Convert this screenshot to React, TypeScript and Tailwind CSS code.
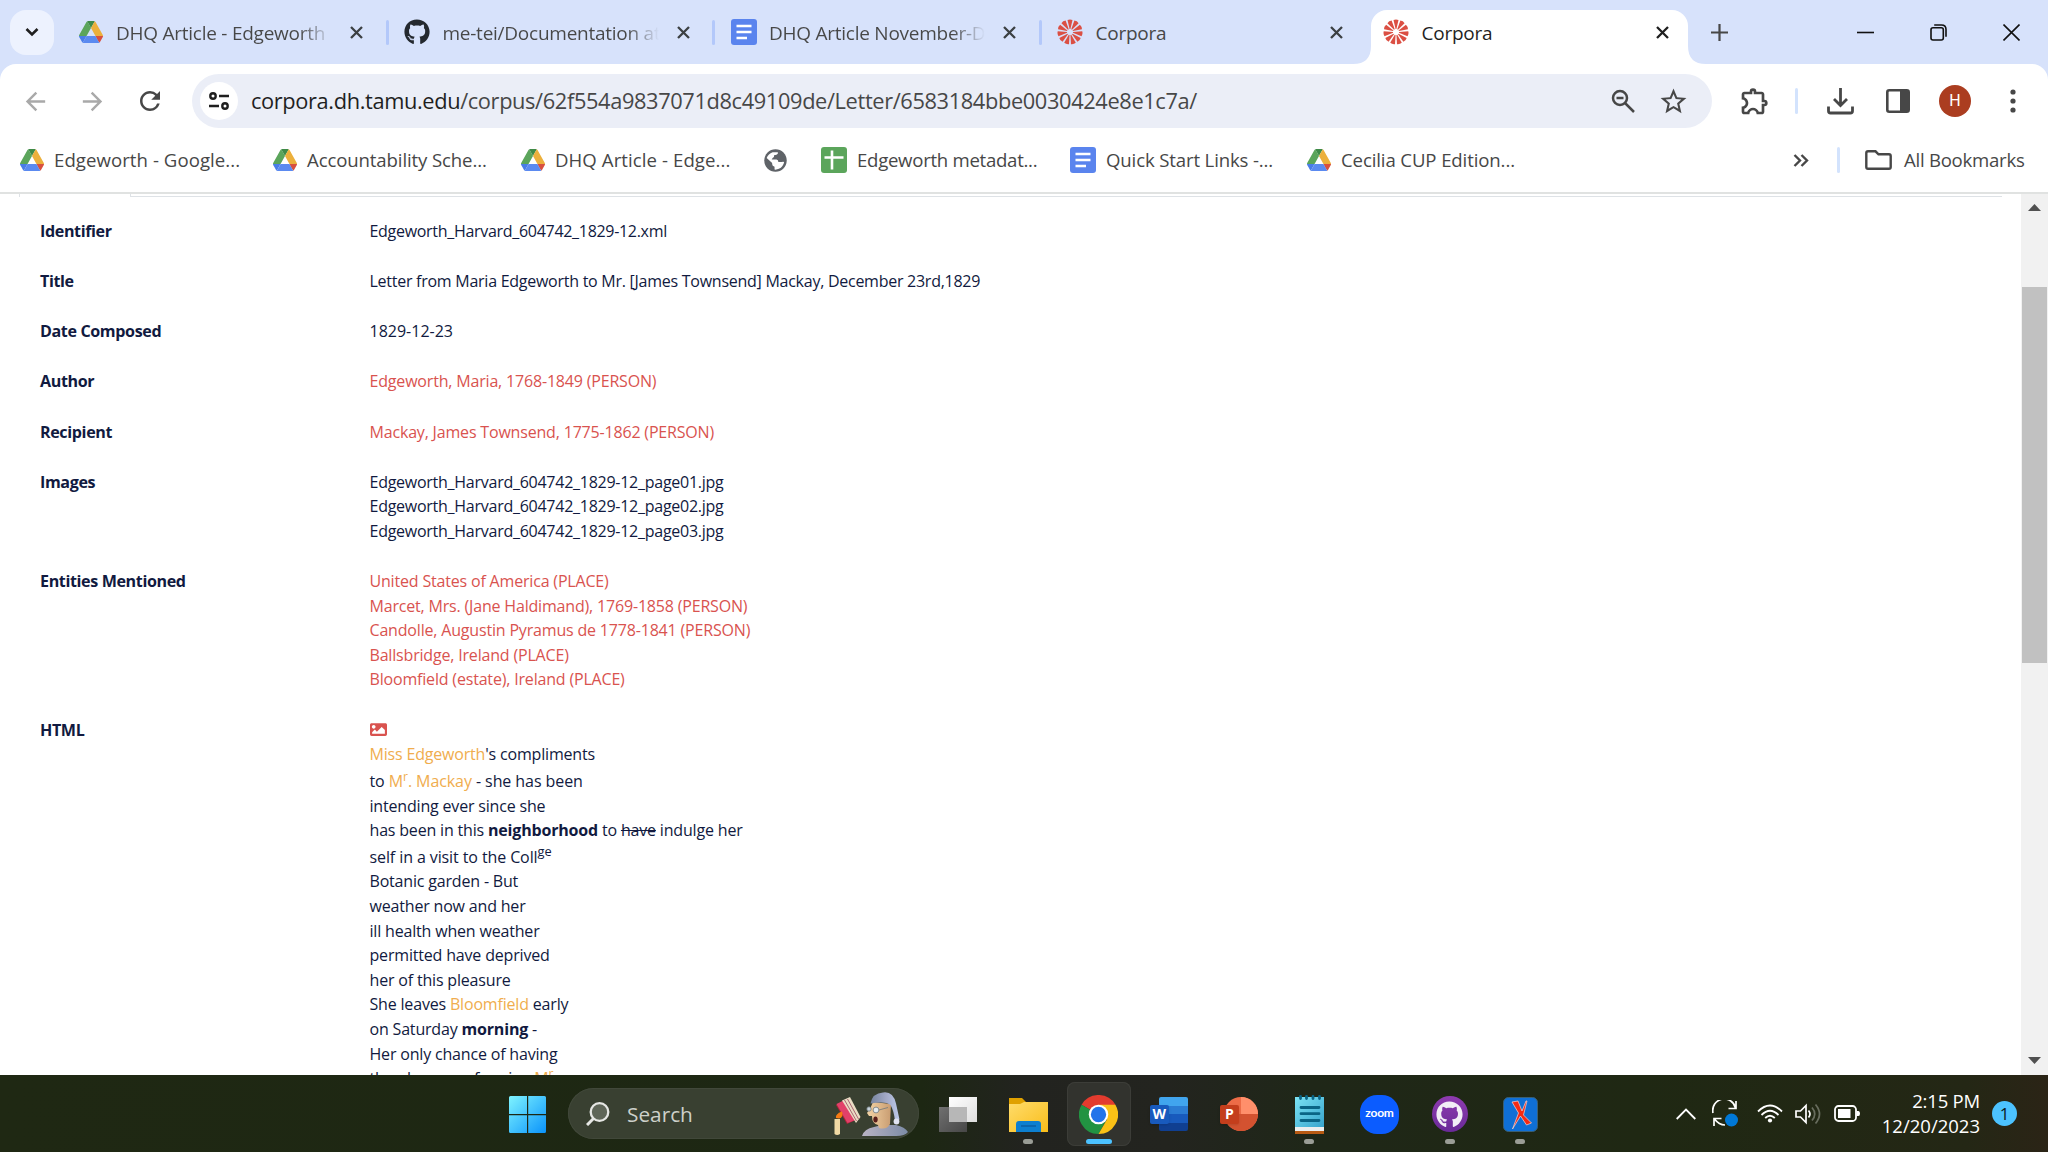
import React, { type ReactNode } from 'react';
import { FaGithub, FaImage } from 'react-icons/fa';
import { MdArrowBack, MdArrowForward, MdRefresh, MdStarOutline, MdOutlineExtension } from 'react-icons/md';

function DriveIcon() {
  return (
    <svg className="h-[22px] w-6 shrink-0" viewBox="0 0 87.3 78" preserveAspectRatio="none">
      <path d="m6.6 66.85 3.85 6.65c.8 1.4 1.95 2.5 3.3 3.3l13.75-23.8h-27.5c0 1.55.4 3.1 1.2 4.5z" fill="#4a7de8" />
      <path d="m43.65 25-13.75-23.8c-1.35.8-2.5 1.9-3.3 3.3l-25.4 44a9.06 9.06 0 0 0-1.2 4.5h27.5z" fill="#5ba55b" />
      <path d="m73.55 76.8c1.35-.8 2.5-1.9 3.3-3.3l1.6-2.75 7.65-13.25c.8-1.4 1.2-2.95 1.2-4.5h-27.502l5.852 11.5z" fill="#d8503f" />
      <path d="m43.65 25 13.75-23.8c-1.35-.8-2.9-1.2-4.5-1.2h-18.5c-1.6 0-3.15.45-4.5 1.2z" fill="#3f8a48" />
      <path d="m59.8 53h-32.3l-13.75 23.8c1.35.8 2.9 1.2 4.5 1.2h50.8c1.6 0 3.15-.45 4.5-1.2z" fill="#5b8af0" />
      <path d="m73.4 26.5-12.7-22c-.8-1.4-1.95-2.5-3.3-3.3l-13.75 23.8 16.15 28h27.45c0-1.55-.4-3.1-1.2-4.5z" fill="#ecb03c" />
    </svg>
  );
}

function DocsIcon() {
  return (
    <svg className="size-[26px] shrink-0" viewBox="0 0 26 26">
      <rect width="26" height="26" rx="3" fill="#5a84ee" />
      <path d="M5.5 7h15M5.5 13h15M5.5 19h10.5" stroke="#fff" strokeWidth="2.6" />
    </svg>
  );
}

function SheetsIcon() {
  return (
    <svg className="size-[26px] shrink-0" viewBox="0 0 26 26">
      <rect width="26" height="26" rx="3" fill="#5ba55b" />
      <path d="M3.5 10.5h19M11 3.5v19" stroke="#fff" strokeWidth="2.6" />
    </svg>
  );
}

function GlobeIcon() {
  return (
    <svg className="size-[23px] shrink-0" viewBox="0 0 24 24">
      <circle cx="12" cy="12" r="11.700" fill="#5f6368" />
      <path d="M2.800 9.500Q4.500 5 9 3.500h5.500q.5 2-1.500 2.500l-2.500.500q.5 2-1.500 3l-1 1.500h5q2 .5 2 2.500h3.500q1.500-.5 2.500 0-.8 5-5.500 7.200-2 1-4.500.8v-3q-2.500-.3-2.500-2.800v-1z" fill="#fff" />
    </svg>
  );
}

const petals = Array.from({ length: 11 }, (_, i) => (i * 360) / 11);

function CorporaIcon() {
  return (
    <svg className="size-[26px] shrink-0" viewBox="-13 -13 26 26">
      {petals.map((a) => (
        <path key={a} d="M-.4 -3L-2.500 -12Q0 -13.200 2.500 -12L.4 -3Z" fill="#db4f43" transform={`rotate(${a})`} />
      ))}
    </svg>
  );
}

function CloseX({ dark }: { dark?: boolean }) {
  return (
    <svg className={dark ? 'size-[13px] shrink-0 text-[#1f1f1f]' : 'size-[13px] shrink-0 text-[#3c4043]'} viewBox="0 0 13 13">
      <path d="M1 1l11 11M12 1L1 12" stroke="currentColor" strokeWidth="2.3" />
    </svg>
  );
}

function Tab({ icon, title, fade }: { icon: ReactNode; title: string; fade?: boolean }) {
  return (
    <div className="flex h-full w-[326.5px] shrink-0 items-center pl-[17px] pr-[24px]">
      <div className="flex w-[26px] justify-center">{icon}</div>
      <div
        className={
          fade
            ? 'ml-[12.500px] w-[216px] whitespace-nowrap bg-gradient-to-r from-[#474747] from-85% to-transparent bg-clip-text pt-[3px] text-transparent'
            : 'ml-[12.500px] w-[216px] whitespace-nowrap pt-[3px] text-[#474747]'
        }
      >
        {title}
      </div>
      <div className="ml-auto flex">
        <CloseX />
      </div>
    </div>
  );
}

function TabStrip() {
  const sep = <div className="-mx-[1.5px] h-[25px] w-[3px] shrink-0 rounded-full bg-[#b3c8fa]" />;
  return (
    <div className="flex h-16 items-center bg-[#d7e2fb] text-[19px] tracking-[-0.25px]">
      <div className="ml-[10px] flex h-[45px] w-11 shrink-0 items-center justify-center rounded-2xl bg-[#edf2fe]">
        <svg className="h-[10px] w-[14px]" viewBox="0 0 14 10">
          <path d="M1.5 2l5.5 5.5L12.500 2" fill="none" stroke="#1f1f1f" strokeWidth="2.6" />
        </svg>
      </div>
      <div className="w-[6.5px] shrink-0" />
      <Tab icon={<DriveIcon />} title="DHQ Article - Edgeworth" fade />
      {sep}
      <Tab icon={<FaGithub className="size-[26px] text-[#24292f]" />} title="me-tei/Documentation at" fade />
      {sep}
      <Tab icon={<DocsIcon />} title="DHQ Article November-D" fade />
      {sep}
      <Tab icon={<CorporaIcon />} title="Corpora" />
      <div className="relative ml-[4.500px] mt-[9.5px] flex h-[54.5px] w-[317px] shrink-0 items-center self-start rounded-t-2xl bg-white pb-[9.5px] pl-[12px] pr-[19px]">
        <svg className="absolute -left-[18px] bottom-0 size-[18px]" viewBox="0 0 18 18">
          <path d="M18 0v18H0Q18 18 18 0z" fill="#fff" />
        </svg>
        <svg className="absolute -right-[18px] bottom-0 size-[18px]" viewBox="0 0 18 18">
          <path d="M0 0v18h18Q0 18 0 0z" fill="#fff" />
        </svg>
        <CorporaIcon />
        <div className="ml-[12.500px] pt-[3px] text-[#1f1f1f]">Corpora</div>
        <div className="ml-auto flex">
          <CloseX dark />
        </div>
      </div>
      <svg className="ml-[23px] size-[17px]" viewBox="0 0 17 17">
        <path d="M8.5 0v17M0 8.500h17" stroke="#474747" strokeWidth="2.2" />
      </svg>
      <div className="ml-auto mr-[28px] flex items-center gap-[56px]">
        <svg className="size-[17px]" viewBox="0 0 17 17">
          <path d="M0 8.500h17" stroke="#111" strokeWidth="1.6" />
        </svg>
        <svg className="size-[17px]" viewBox="0 0 17 17" fill="none" stroke="#111" strokeWidth="1.6">
          <rect x="1" y="3.700" width="12.300" height="12.300" rx="2" />
          <path d="M4.200 1h7.300q4.500 0 4.500 4.500v7.300" />
        </svg>
        <svg className="size-[17px]" viewBox="0 0 17 17">
          <path d="M.5 .5l16 16M16.500 .5l-16 16" stroke="#111" strokeWidth="1.6" />
        </svg>
      </div>
    </div>
  );
}

function Toolbar() {
  return (
    <div className="flex h-[74px] items-center rounded-t-[16px] bg-white text-[#474747]">
      <div className="ml-[21px] flex w-[144px] items-center justify-between">
        <MdArrowBack className="size-[29px] text-[#a9a9a9]" />
        <MdArrowForward className="size-[29px] text-[#a9a9a9]" />
        <MdRefresh className="size-[30px]" />
      </div>
      <div className="ml-[27px] flex h-[54px] w-[1520px] items-center rounded-full bg-[#ebeef7] pl-2 pr-[23px]">
        <div className="flex size-[38px] items-center justify-center rounded-full bg-white">
          <svg className="h-[18px] w-5" viewBox="0 0 20 18" fill="none" stroke="#1f1f1f" strokeWidth="2.400">
            <circle cx="4" cy="4" r="2.700" />
            <path d="M10 4h10M0 14h10" />
            <circle cx="16" cy="14" r="2.700" />
          </svg>
        </div>
        <div className="ml-[13px] whitespace-nowrap text-[21.8px] tracking-[-0.37px]">
          <span className="text-[#1f1f1f]">corpora.dh.tamu.edu</span>/corpus/62f554a9837071d8c49109de/Letter/6583184bbe0030424e8e1c7a/
        </div>
        <svg className="ml-auto size-6" viewBox="0 0 24 24" fill="none" stroke="#474747" strokeWidth="2.500">
          <circle cx="9" cy="9" r="7" />
          <path d="M14 14l9 9M5.500 9h7" />
        </svg>
        <MdStarOutline className="ml-[23px] size-[31px]" />
      </div>
      <MdOutlineExtension className="ml-[27px] size-[32px]" />
      <div className="ml-6 h-[26px] w-[3px] rounded-full bg-[#d3e3fd]" />
      <svg className="ml-[29px] size-[27px]" viewBox="0 0 27 27" fill="none" stroke="#474747" strokeWidth="2.800">
        <path d="M13.500 0v17M7 11l6.500 6.500L20 11M1.500 18.500v4.500q0 2 2 2h20q2 0 2-2v-4.500" />
      </svg>
      <svg className="ml-[32px] size-6" viewBox="0 0 24 24">
        <rect x="1.300" y="1.300" width="21.400" height="21.400" rx="2" fill="none" stroke="#474747" strokeWidth="2.600" />
        <path d="M14 1h9v22h-9z" fill="#474747" />
      </svg>
      <div className="ml-[29px] flex size-8 items-center justify-center rounded-full bg-[#ab3d20] font-[Roboto] text-[16px] text-white">H</div>
      <svg className="ml-[39px] h-6 w-[6px]" viewBox="0 0 6 24" fill="#474747">
        <circle cx="3" cy="3" r="2.600" />
        <circle cx="3" cy="12" r="2.600" />
        <circle cx="3" cy="21" r="2.600" />
      </svg>
    </div>
  );
}

function Bookmark({ icon, label, className }: { icon: ReactNode; label?: string; className: string }) {
  return (
    <div className={`flex shrink-0 items-center gap-[10px] whitespace-nowrap ${className}`}>
      {icon}
      {label}
    </div>
  );
}

function Bookmarks() {
  return (
    <div className="flex h-14 items-center border-b-2 border-[#e0e2e1] bg-white pb-[10px] pl-5 text-[18.6px] text-[#474747]">
      <Bookmark icon={<DriveIcon />} label="Edgeworth - Google..." className="w-[253px] tracking-[0.06px]" />
      <Bookmark icon={<DriveIcon />} label="Accountability Sche..." className="w-[248px] tracking-[-0.12px]" />
      <Bookmark icon={<DriveIcon />} label="DHQ Article - Edge..." className="w-[243px] tracking-[0.08px]" />
      <Bookmark icon={<GlobeIcon />} className="w-[57px]" />
      <Bookmark icon={<SheetsIcon />} label="Edgeworth metadat..." className="w-[249px] tracking-[-0.28px]" />
      <Bookmark icon={<DocsIcon />} label="Quick Start Links -..." className="w-[237px] tracking-[-0.14px]" />
      <Bookmark icon={<DriveIcon />} label="Cecilia CUP Edition..." className="w-[208px] tracking-[-0.12px]" />
      <svg className="ml-auto h-[13px] w-4" viewBox="0 0 16 13">
        <path d="M1.500 1l5.500 5.500L1.500 12M8.500 1l5.500 5.500L8.500 12" fill="none" stroke="#474747" strokeWidth="2.400" />
      </svg>
      <div className="ml-7 h-[26px] w-[3px] rounded-full bg-[#d3e3fd]" />
      <svg className="ml-[25px] h-5 w-[27px]" viewBox="0 0 27 20">
        <path d="M1.300 3v14q0 1.700 1.700 1.700h21q1.700 0 1.700-1.700V6q0-1.700-1.700-1.700H13.500L10.500 1.300H3Q1.300 1.300 1.300 3z" fill="none" stroke="#474747" strokeWidth="2.400" />
      </svg>
      <div className="ml-3 mr-6 w-[120px] whitespace-nowrap tracking-[-0.26px]">All Bookmarks</div>
    </div>
  );
}

function Row({ label, children }: { label: string; children: ReactNode }) {
  return (
    <div className="flex py-[12.8px]">
      <div className="w-[329.5px] shrink-0 text-[16.1px] font-bold tracking-[-0.38px]">{label}</div>
      <div className="whitespace-nowrap">{children}</div>
    </div>
  );
}

const Red = ({ children }: { children: ReactNode }) => <div className="text-[#d9534f]">{children}</div>;
const Ref = ({ children }: { children: ReactNode }) => <span className="text-[#f0ad4e]">{children}</span>;
const File = ({ children }: { children: ReactNode }) => <div className="tracking-[-0.26px]">{children}</div>;

function Page() {
  return (
    <div className="flex h-[881px] overflow-hidden bg-white">
      <div className="h-full flex-1 overflow-hidden text-[16px] leading-[24.6px] tracking-[-0.18px] text-[#111a40]">
        <div className="ml-[19px] mr-[19px] flex h-[3px]">
          <div className="w-px bg-[#dee2e6]" />
          <div className="ml-[110px] flex-1 border-b border-l border-[#dee2e6]" />
        </div>
        <div className="pl-10 pt-[9px]">
          <Row label="Identifier"><div className="tracking-[-0.3px]">Edgeworth_Harvard_604742_1829-12.xml</div></Row>
          <Row label="Title"><div className="tracking-[-0.26px]">Letter from Maria Edgeworth to Mr. [James Townsend] Mackay, December 23rd,1829</div></Row>
          <Row label="Date Composed"><div className="tracking-normal">1829-12-23</div></Row>
          <Row label="Author"><Red>Edgeworth, Maria, 1768-1849 (PERSON)</Red></Row>
          <Row label="Recipient"><Red>Mackay, James Townsend, 1775-1862 (PERSON)</Red></Row>
          <Row label="Images">
            <File>Edgeworth_Harvard_604742_1829-12_page01.jpg</File>
            <File>Edgeworth_Harvard_604742_1829-12_page02.jpg</File>
            <File>Edgeworth_Harvard_604742_1829-12_page03.jpg</File>
          </Row>
          <Row label="Entities Mentioned">
            <Red>United States of America (PLACE)</Red>
            <Red>Marcet, Mrs. (Jane Haldimand), 1769-1858 (PERSON)</Red>
            <Red>Candolle, Augustin Pyramus de 1778-1841 (PERSON)</Red>
            <Red>Ballsbridge, Ireland (PLACE)</Red>
            <Red>Bloomfield (estate), Ireland (PLACE)</Red>
          </Row>
          <Row label="HTML">
            <div className="flex h-[24.6px] items-center"><FaImage className="size-[17px] text-[#d9534f]" /></div>
            <div><Ref>Miss Edgeworth</Ref>'s compliments</div>
            <div className="h-[26.7px] pt-[2px] tracking-[-0.08px]">to <Ref>M<sup className="text-[75%] leading-none">r</sup>. Mackay</Ref> - she has been</div>
            <div>intending ever since she</div>
            <div>has been in this <b>neighborhood</b> to <s>have</s> indulge her</div>
            <div className="h-[26.7px] pt-[2px] tracking-[-0.1px]">self in a visit to the Coll<sup className="text-[80%] leading-none">ge</sup></div>
            <div>Botanic garden - But</div>
            <div>weather now and her</div>
            <div>ill health when weather</div>
            <div>permitted have deprived</div>
            <div>her of this pleasure</div>
            <div>She leaves <Ref>Bloomfield</Ref> early</div>
            <div>on Saturday <b>morning</b> -</div>
            <div>Her only chance of having</div>
            <div>the pleasure of seeing <Ref>M<sup className="text-[75%] leading-none">r</sup></Ref></div>
          </Row>
        </div>
      </div>
      <div className="flex w-[27px] shrink-0 flex-col items-center bg-[#f1f1f1]">
        <svg className="mt-[10px] h-[7px] w-[13px]" viewBox="0 0 13 7"><path d="M6.500 0L13 7H0z" fill="#505050" /></svg>
        <div className="mt-[76px] h-[376px] w-[25px] bg-[#c1c1c1]" />
        <svg className="mb-[11px] mt-auto h-[7px] w-[13px]" viewBox="0 0 13 7"><path d="M6.500 7L13 0H0z" fill="#505050" /></svg>
      </div>
    </div>
  );
}

function Reader() {
  return (
    <svg className="h-[46px] w-[76px]" viewBox="0 0 76 46">
      <defs>
        <linearGradient id="cap" x1="0" x2="1"><stop offset="0" stopColor="#76849f" /><stop offset=".55" stopColor="#a3a9c6" /><stop offset="1" stopColor="#bccaea" /></linearGradient>
        <linearGradient id="robe" x1="0" x2="1"><stop offset="0" stopColor="#b9b3c4" /><stop offset="1" stopColor="#7c8ba6" /></linearGradient>
        <linearGradient id="skin" x1="0" x2="1"><stop offset="0" stopColor="#f3d3a4" /><stop offset="1" stopColor="#c99d72" /></linearGradient>
      </defs>
      <path d="M3 14l13-7 11 20-13 6z" fill="#b02438" />
      <path d="M3.500 13l10-5 9 21-8 3z" fill="#e2406a" />
      <path d="M9 9.500l8-3.500 10.500 20-4.500 6z" fill="#eadcc4" />
      <path d="M11.500 9l12 21M14.500 8l11 20" stroke="#a0566a" strokeWidth=".9" />
      <path d="M1.500 28h5.500v15q-2.800 2-5.500 0z" fill="#f0d9a4" />
      <path d="M3 27q-1-4 6-6.500 2 6-3 7z" fill="#f77b13" />
      <path d="M29 45q2-7 12-9l8-2h14q9 2 12 7-3 4-12 4z" fill="url(#robe)" />
      <path d="M40 11q-2 6-6 11l2 3 3 0q0 8 6 9l1 3q8 2 11-4l1-20z" fill="url(#skin)" />
      <path d="M37.500 12.500Q39.500 2 50 1.500q10-1.500 13 11l3.500 16-4.500 1.500Q61 20 57.500 14q-5-4-20-1.500z" fill="url(#cap)" />
      <circle cx="63.500" cy="30.500" r="2.900" fill="#e1e4f2" />
      <circle cx="43" cy="19" r="2.900" fill="#e6ecee" stroke="#6e777c" strokeWidth=".8" />
      <circle cx="36" cy="18" r="2.200" fill="#c8d4dc" stroke="#6e777c" strokeWidth=".8" />
      <path d="M46 19l9-2.500" stroke="#6e777c" strokeWidth=".8" />
      <ellipse cx="42.500" cy="28.500" rx="2.200" ry="3" fill="#5a1e1a" />
    </svg>
  );
}

function AppButton({ children, run, active }: { children: ReactNode; run?: boolean; active?: boolean }) {
  return (
    <div className={`relative flex size-16 items-center justify-center rounded-lg ${active ? 'bg-[#32332e] ring-1 ring-inset ring-[#3c3d38]' : ''}`}>
      {children}
      {run && <div className="absolute bottom-[2px] h-[5px] w-[10px] rounded-full bg-[#9a9d96]" />}
      {active && <div className="absolute bottom-[2px] h-[5px] w-[26px] rounded-full bg-[#4cc2ff]" />}
    </div>
  );
}

function Letter({ c, className }: { c: string; className: string }) {
  return <div className={`absolute left-0 top-[7.500px] flex size-[19px] items-center justify-center rounded-[2px] text-[14px] font-bold leading-none text-white shadow ${className}`}>{c}</div>;
}

function Taskbar() {
  return (
    <div className="flex h-[77px] items-center bg-[linear-gradient(90deg,#1f2813_0%,#1d2713_45%,#22231f_50%,#23241f_57%,#1f2718_64%,#1f2813_80%,#242715_96%,#2b2416_100%)]">
      <svg className="ml-[509px] mt-px size-[37px] shrink-0" viewBox="0 0 37 37">
        <defs><linearGradient id="win" x1="0" y1="0" x2="1" y2="1"><stop offset="0" stopColor="#7ff4ff" /><stop offset="1" stopColor="#0a93fb" /></linearGradient></defs>
        <path d="M1.500 0H18v18H0V1.500Q0 0 1.500 0zM19.200 0H35.500Q37 0 37 1.500V18H19.200zM0 19.200h18V37H1.500Q0 37 0 35.500zM19.200 19.200H37v16.300q0 1.500-1.500 1.500H19.200z" fill="url(#win)" />
      </svg>
      <div className="ml-[22px] flex h-[51px] w-[351px] shrink-0 items-center rounded-full bg-[#394031] pl-[18px] pr-[10px] ring-1 ring-inset ring-[#41483a]">
        <svg className="size-6" viewBox="0 0 24 24" fill="#5f6658" stroke="#e6e7e4" strokeWidth="2.300">
          <circle cx="13.500" cy="10" r="8.800" />
          <path d="M7.500 16.500L1 23" strokeWidth="3" />
        </svg>
        <div className="ml-[17px] pt-[2px] text-[20.800px] text-[#cdd0ca]">Search</div>
        <div className="ml-auto"><Reader /></div>
      </div>
      <div className="ml-[7px] mt-px flex w-[626px] shrink-0 items-center justify-between">
        <AppButton>
          <svg className="h-[35px] w-[38px]" viewBox="0 0 38 35">
            <defs>
              <linearGradient id="back" x1="0" y1="0" x2="1" y2="1"><stop offset="0" stopColor="#707070" /><stop offset="1" stopColor="#474747" /></linearGradient>
              <linearGradient id="front" x1="0" y1="0" x2="1" y2="1"><stop offset="0" stopColor="#ffffff" /><stop offset="1" stopColor="#dedede" /></linearGradient>
            </defs>
            <path d="M0 10h28v25H0z" fill="url(#back)" />
            <path d="M10 0h28v25H10z" fill="url(#front)" />
            <path d="M10 10h18v15H10z" fill="#b7b7b7" />
          </svg>
        </AppButton>
        <AppButton run>
          <svg className="h-[35px] w-[39px]" viewBox="0 0 39 35">
            <defs><linearGradient id="fold" x1="0" y1="0" x2="1" y2="1"><stop offset="0" stopColor="#ffdc6b" /><stop offset="1" stopColor="#f9bd1a" /></linearGradient></defs>
            <path d="M0 1h13l4 4v5H0z" fill="#e0a100" />
            <path d="M0 7h11l4-2h24v30H0z" fill="url(#fold)" />
            <path d="M7 35v-8q0-3 3-3h19q3 0 3 3v8z" fill="#0d7fd0" />
            <path d="M12 29h15" stroke="#0a4f8c" />
          </svg>
        </AppButton>
        <AppButton active>
          <svg className="size-[39px]" viewBox="0 0 48 48">
            <path d="M24 24L3.200 12A24 24 0 0 1 44.800 12z" fill="#e33b2e" />
            <path d="M24 24L3.200 12A24 24 0 0 0 24 48L34 30z" fill="#229342" />
            <path d="M24 12h20.800A24 24 0 0 1 24 48l10.400-18z" fill="#fbc116" />
            <circle cx="24" cy="24" r="12" fill="#fff" />
            <circle cx="24" cy="24" r="9.400" fill="#2374ea" />
          </svg>
        </AppButton>
        <AppButton>
          <div className="relative h-[34px] w-[38px]">
            <div className="ml-[9px] flex h-full flex-col overflow-hidden rounded-[2px]">
              <div className="flex-1 bg-[#41a5ee]" /><div className="flex-1 bg-[#2b7cd3]" /><div className="flex-1 bg-[#185abd]" /><div className="flex-1 bg-[#103f91]" />
            </div>
            <Letter c="W" className="bg-[#185abd]" />
          </div>
        </AppButton>
        <AppButton>
          <div className="relative h-[34px] w-[38px]">
            <svg className="ml-1 size-[34px]" viewBox="0 0 34 34">
              <circle cx="17" cy="17" r="17" fill="#ed6c47" />
              <path d="M17 17V0a17 17 0 0 1 17 17z" fill="#ff8f6b" />
              <path d="M0 17h34a17 17 0 0 1-34 0z" fill="#d35230" />
            </svg>
            <Letter c="P" className="bg-[#c43e1c]" />
          </div>
        </AppButton>
        <AppButton run>
          <svg className="h-[39px] w-[29px]" viewBox="0 0 29 39">
            <defs><linearGradient id="note" x1="0" y1="0" x2="1" y2="1"><stop offset="0" stopColor="#7be3f5" /><stop offset="1" stopColor="#38a4cc" /></linearGradient></defs>
            <path d="M0 34h29v5H0z" fill="#b75a13" />
            <path d="M0 31h29v5H0z" fill="#eceeee" />
            <path d="M0 2h29v30H0z" fill="url(#note)" />
            <path d="M5.500 1.500v2M11.500 1.500v2M18 1.500v2M24.500 1.500v2M6 12.500h18M6 18.700h18M6 25.500h18" stroke="#0a6485" strokeWidth="2.800" strokeLinecap="round" />
          </svg>
        </AppButton>
        <AppButton>
          <div className="flex size-[39px] items-center justify-center rounded-[17px] bg-[#0b5cff] pb-[2px] font-['Lato'] text-[12px] font-bold leading-none tracking-[-0.2px] text-white">zoom</div>
        </AppButton>
        <AppButton run>
          <div className="flex size-9 items-center justify-center rounded-full bg-gradient-to-b from-[#8f3bb0] to-[#6a2a98]"><FaGithub className="size-[27px] text-[#f2eef6]" /></div>
        </AppButton>
        <AppButton run>
          <svg className="size-[35px]" viewBox="0 0 35 35">
            <rect x=".5" y=".5" width="34" height="34" rx="5" fill="#0f6fd6" stroke="#3a5f72" />
            <path d="M9 5l6-1 4 10 4-10h1l-3.500 14 8 8-5 2-6-9-8 13 6-16z" fill="#f42a14" stroke="#f5d8d5" strokeWidth=".7" />
          </svg>
        </AppButton>
      </div>
      <div className="ml-auto mr-[31px] flex shrink-0 items-center">
        <svg className="h-3 w-[20px]" viewBox="0 0 20 12"><path d="M.7 11L10 1.500 19.300 11" fill="none" stroke="#fff" strokeWidth="1.800" /></svg>
        <svg className="ml-4 size-[27px]" viewBox="0 0 27 27" fill="none" stroke="#fff" strokeWidth="1.700">
          <path d="M1 13A11.500 11.500 0 0 1 23.500 8M24 1v7.500h-7.500M2 26v-7.500h7.500M2.500 19Q7 25 13 25" />
          <circle cx="19.500" cy="20" r="6.500" fill="#0078d7" stroke="none" />
        </svg>
        <svg className="ml-[18px] h-[19px] w-[26px]" viewBox="0 0 26 19" fill="none" stroke="#fff" strokeWidth="1.800">
          <path d="M1 7.500Q13-4.500 25 7.500M4.500 11Q13 2.500 21.500 11M8.200 14Q13 9.500 17.800 14" />
          <circle cx="13" cy="16.500" r="2.100" fill="#fff" stroke="none" />
        </svg>
        <svg className="ml-3 h-[22px] w-[27px]" viewBox="0 0 27 22" fill="none" stroke="#fff" strokeWidth="1.700">
          <path d="M1 8h4.500L11 2.500v17L5.500 14H1z" />
          <path d="M13.500 7.500q3 3.500 0 7" />
          <path d="M17 4.500q5.500 6.500 0 13M20.500 1.500q8 9.500 0 19" stroke="#686d5e" />
        </svg>
        <svg className="ml-3 h-[17px] w-[26px]" viewBox="0 0 26 17">
          <rect x="1" y="1" width="21" height="15" rx="3.500" fill="none" stroke="#fff" strokeWidth="1.800" />
          <path d="M4 4h12.500v9H4zM22.500 6h2q1.500 0 1.500 2.500T24.500 11h-2z" fill="#fff" />
        </svg>
        <div className="ml-5 w-[100px] whitespace-nowrap pb-px text-right text-[18.500px] leading-[25.500px] text-white">
          <div className="tracking-[-0.2px]">2:15 PM</div>
          <div>12/20/2023</div>
        </div>
        <div className="ml-[12px] flex size-[25px] items-center justify-center rounded-full bg-[#4cc2ff] text-[17px] leading-none text-[#0a1a24]">1</div>
      </div>
    </div>
  );
}

export default function App() {
  return (
    <div className="flex h-[1152px] w-[2048px] flex-col overflow-hidden bg-[#d7e2fb] font-['Open_Sans','Noto_Sans',sans-serif]">
      <TabStrip />
      <Toolbar />
      <Bookmarks />
      <Page />
      <Taskbar />
    </div>
  );
}
